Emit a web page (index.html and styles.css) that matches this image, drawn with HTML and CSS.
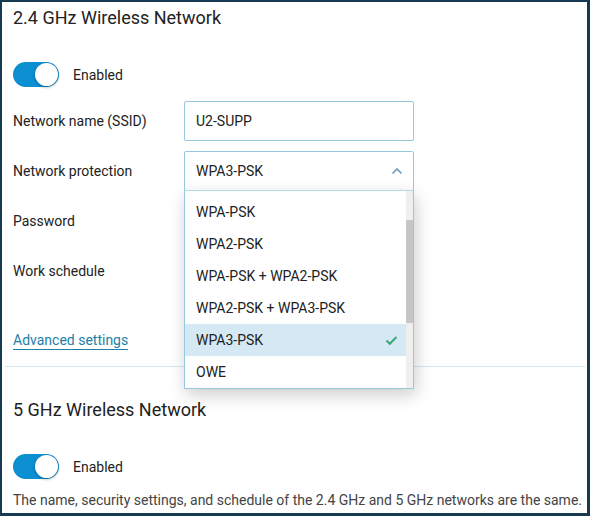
FILE: index.html
```html
<!DOCTYPE html>
<html>
<head>
<meta charset="utf-8">
<link rel="stylesheet" href="styles.css">
</head>
<body>
<div class="page">
  <section class="section">
    <h2 class="title">2.4 GHz Wireless Network</h2>
    <div class="toggle-row">
      <span class="toggle"><span class="knob"></span></span>
      <span class="toggle-label">Enabled</span>
    </div>
    <div class="form">
      <div class="row">
        <span class="label">Network name (SSID)</span>
        <div class="field">U2-SUPP</div>
      </div>
      <div class="row">
        <span class="label">Network protection</span>
        <div class="select-wrap">
          <div class="field select">
            <span>WPA3-PSK</span>
            <svg class="chev" width="12" height="8" viewBox="0 0 12 8"><path d="M1.5 6.5 L6 2 L10.5 6.5" fill="none" stroke="#6a9cc0" stroke-width="1.6"/></svg>
          </div>
          <div class="dropdown">
            <div class="options">
              <div class="opt">WPA-PSK</div>
              <div class="opt">WPA2-PSK</div>
              <div class="opt">WPA-PSK + WPA2-PSK</div>
              <div class="opt">WPA2-PSK + WPA3-PSK</div>
              <div class="opt selected"><span>WPA3-PSK</span>
                <svg width="13" height="11" viewBox="0 0 13 11"><path d="M1.5 5.5 L4.8 8.8 L11.5 2" fill="none" stroke="#3aa874" stroke-width="2"/></svg>
              </div>
              <div class="opt">OWE</div>
            </div>
            <div class="scrollbar"><div class="thumb"></div></div>
          </div>
        </div>
      </div>
      <div class="row">
        <span class="label">Password</span>
      </div>
      <div class="row">
        <span class="label">Work schedule</span>
      </div>
    </div>
    <a class="link" href="#">Advanced settings</a>
  </section>
  <hr class="sep">
  <section class="section second">
    <h2 class="title">5 GHz Wireless Network</h2>
    <div class="toggle-row">
      <span class="toggle"><span class="knob"></span></span>
      <span class="toggle-label">Enabled</span>
    </div>
    <p class="note">The name, security settings, and schedule of the 2.4 GHz and 5 GHz networks are the same.</p>
  </section>
</div>
</body>
</html>
```
FILE: styles.css
```css
* { box-sizing: border-box; }
html, body { margin: 0; padding: 0; background: #fff; }
body { font-family: Roboto, "Noto Sans", Arial, sans-serif; color: #222; font-size: 14px; }
.page {
  width: 590px;
  height: 516px;
  border-style: solid;
  border-color: #173a52;
  border-width: 2px 3px 3px 2px;
  overflow: hidden;
  background: #fff;
}
.section { padding: 4px 0 0 11px; }
.section.second { padding-top: 0; }
.title {
  margin: 0;
  font-size: 18px;
  line-height: 24px;
  font-weight: 400;
  color: #222;
}
.toggle-row {
  display: flex;
  align-items: center;
  gap: 14px;
  margin-top: 32px;
  height: 25px;
}
.toggle {
  width: 46px;
  height: 25px;
  border-radius: 13px;
  background: #0b8fd1;
  display: flex;
  justify-content: flex-end;
  align-items: center;
  padding: 0 1px;
}
.knob {
  width: 23px;
  height: 23px;
  border-radius: 50%;
  background: #fff;
  box-shadow: 0 1px 3px rgba(0,0,0,.35);
}
.toggle-label { font-size: 14px; color: #222; }
.form {
  margin-top: 14px;
  display: flex;
  flex-direction: column;
  gap: 10px;
}
.row {
  display: flex;
  align-items: center;
  height: 40px;
}
.label { width: 171px; font-size: 14px; color: #222; padding-bottom: 1px; }
.field {
  width: 230px;
  height: 40px;
  border: 1px solid #96c8de;
  border-radius: 2px;
  padding: 0 11px;
  display: flex;
  align-items: center;
  font-size: 14px;
  color: #222;
}
.select-wrap { position: relative; }
.select { justify-content: space-between; padding-right: 10px; }
.dropdown {
  position: absolute;
  left: 0;
  top: 39px;
  width: 230px;
  height: 199px;
  border: 1px solid #96c8de;
  border-top-color: #b9dbe9;
  background: #fff;
  box-shadow: 2px 6px 16px rgba(0,0,0,.2);
  display: flex;
  z-index: 5;
}
.options { flex: 1; padding-top: 5px; overflow: hidden; }
.opt {
  height: 32px;
  padding: 0 8px 0 11px;
  display: flex;
  align-items: center;
  justify-content: space-between;
  font-size: 14px;
  color: #222;
}
.opt.selected { background: #d5e9f4; }
.scrollbar { width: 7px; background: #efefef; }
.thumb { margin-top: 29px; height: 103px; background: #c6c6c6; }
.link {
  display: inline-block;
  margin-top: 41px;
  color: #1c7fa7;
  text-decoration: none;
  font-size: 14px;
  line-height: 17px;
  border-bottom: 1px solid #1c7fa7;
}
.sep {
  margin: 16px 2px 0 3px;
  border: 0;
  border-top: 1px solid #d3e7f0;
  height: 0;
}
.second .title { margin-top: 31px; }
.note {
  margin: 12px 0 0;
  font-size: 14px;
  line-height: 18px;
  color: #444;
  white-space: nowrap;
}
```
